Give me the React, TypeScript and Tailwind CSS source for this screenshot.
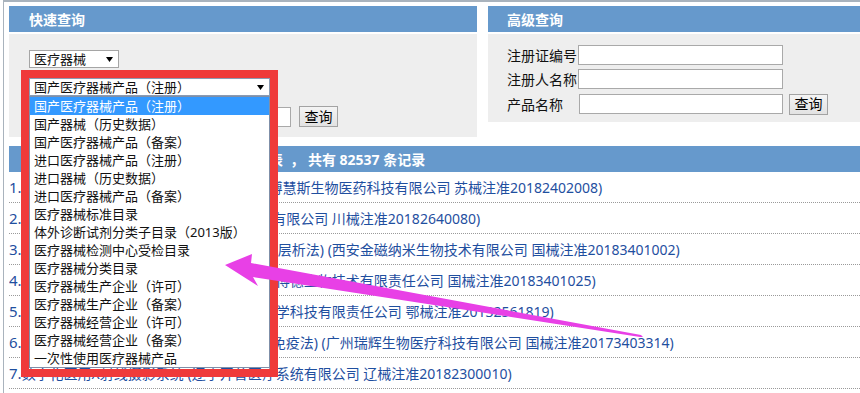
import React from "react";

const items = [
  "国产医疗器械产品（注册）",
  "国产器械（历史数据）",
  "国产医疗器械产品（备案）",
  "进口医疗器械产品（注册）",
  "进口器械（历史数据）",
  "进口医疗器械产品（备案）",
  "医疗器械标准目录",
  "体外诊断试剂分类子目录（2013版）",
  "医疗器械检测中心受检目录",
  "医疗器械分类目录",
  "医疗器械生产企业（许可）",
  "医疗器械生产企业（备案）",
  "医疗器械经营企业（许可）",
  "医疗器械经营企业（备案）",
  "一次性使用医疗器械产品",
];

const rows = [
  "血清淀粉样蛋白A(SAA)测定试剂盒 (苏州博慧斯生物医药科技有限公司 苏械注准20182402008)",
  "肌钙蛋白I测定试剂盒 (成都爱兴生物科技有限公司 川械注准20182640080)",
  "人降钙素原全定量检测试剂盒(胶体金免疫层析法) (西安金磁纳米生物技术有限公司 国械注准20183401002)",
  "幽门螺杆菌抗体检测试剂盒(金标法) (北京博德生物技术有限责任公司 国械注准20183401025)",
  "尿液分析试纸(干化学法) (武汉毓晋生物医学科技有限责任公司 鄂械注准20132561819)",
  "乙型肝炎病毒e抗体定量检测试剂盒(酶联免疫法) (广州瑞辉生物医疗科技有限公司 国械注准20173403314)",
  "数字化医用X射线摄影系统 (辽宁开普医疗系统有限公司 辽械注准20182300010)",
];

function Arrow() {
  return (
    <svg width="7" height="5" viewBox="0 0 7 5" className="block">
      <polygon points="0,0 7,0 3.5,5" fill="#000" />
    </svg>
  );
}

function Btn() {
  return (
    <div className="flex items-center justify-center w-[39px] h-[21px] border border-[#a3a3a3] bg-gradient-to-b from-[#f4f4f4] to-[#e2e2e2] text-[14px] text-black leading-none">
      查询
    </div>
  );
}

export default function App() {
  return (
    <div className="relative w-[860px] h-[393px] overflow-hidden bg-white font-[Noto_Sans,Noto_Sans_CJK_SC,sans-serif]">
      <div className="ml-[3px] h-full border-l border-t-2 border-[#a9b3bd] pl-[5px] pt-[4px]">
        <div className="flex gap-[11px]">
          {/* left panel */}
          <div className="w-[468px] shrink-0">
            <div className="h-[26px] bg-[#6699cc] pl-[20px] flex items-center text-[14px] font-bold text-white">
              快速查询
            </div>
            <div className="mt-[2px] h-[103px] bg-[#eeeeee] pl-[20px] pt-[16px]">
              <div className="flex items-center justify-between w-[90px] h-[18px] border border-[#a5a5a5] bg-white pl-[4px] pr-[5px] text-[13px] text-[#111] leading-none">
                <span>医疗器械</span>
                <Arrow />
              </div>
              <div className="relative mt-[10px] w-[241px] h-[18px]">
                <div className="flex items-center justify-between w-full h-full border border-[#8a9bb3] bg-white pl-[4px] pr-[5px] text-[13px] text-[#111] leading-none">
                  <span>国产医疗器械产品（注册）</span>
                  <Arrow />
                </div>
              </div>
              <div className="mt-[10px] flex items-center h-[21px]">
                <div className="ml-[71px] w-[191px] h-[20px] border border-[#a9a9a9] bg-white" />
                <div className="ml-[8px]">
                  <Btn />
                </div>
              </div>
            </div>
          </div>
          {/* right panel */}
          <div className="w-[372px] shrink-0">
            <div className="h-[26px] bg-[#6699cc] pl-[19px] flex items-center text-[14px] font-bold text-white">
              高级查询
            </div>
            <div className="mt-[2px] h-[88px] bg-[#eeeeee] pl-[19px] pt-[11px] text-[14px] text-[#111]">
              <div className="flex items-center h-[20px]">
                <span className="w-[71px] whitespace-nowrap">注册证编号</span>
                <div className="w-[205px] h-[20px] border border-[#a9a9a9] bg-white" />
              </div>
              <div className="mt-[4px] flex items-center h-[20px]">
                <span className="w-[71px] whitespace-nowrap">注册人名称</span>
                <div className="w-[205px] h-[20px] border border-[#a9a9a9] bg-white" />
              </div>
              <div className="mt-[5px] flex items-center h-[20px]">
                <span className="w-[72px] whitespace-nowrap">产品名称</span>
                <div className="w-[204px] h-[20px] border border-[#a9a9a9] bg-white" />
                <div className="ml-[6px]">
                  <Btn />
                </div>
              </div>
            </div>
          </div>
        </div>

        {/* section header */}
        <div className="mt-[9px] h-[26px] bg-[#6699cc] pl-[22px] flex items-center text-[14px] font-bold text-white whitespace-nowrap">
          国产医疗器械产品（注册）数据信息列表{"\u00a0\u00a0，\u00a0"}共有 82537 条记录
        </div>

        {/* list */}
        <div>
          {rows.map((r, i) => (
            <div
              key={i}
              className="h-[31px] flex items-center border-b border-dotted border-[#9a9a9a] text-[14px] text-[#1f4f9f] whitespace-nowrap overflow-hidden"
            >
              <span className="text-[15px]">{i + 1}.</span>
              <span>{r}</span>
            </div>
          ))}
        </div>
      </div>

      {/* open dropdown list */}
      <div className="absolute left-[29px] top-[96px] w-[241px] h-[272px] border border-[#7f8fa8] bg-white text-[13px] text-[#111]">
        {items.map((it, i) => (
          <div
            key={i}
            className={
              i === 0
                ? "h-[18px] leading-[18px] pl-[4px] bg-[#3399ff] text-white whitespace-nowrap"
                : "h-[18px] leading-[18px] pl-[4px] whitespace-nowrap"
            }
          >
            {it}
          </div>
        ))}
      </div>

      {/* red annotation box */}
      <div className="absolute left-[21px] top-[70px] w-[257px] h-[307px] border-[8px] border-[#ef3a3a]" />

      {/* magenta arrow */}
      <svg
        className="absolute left-0 top-0 pointer-events-none"
        width="860"
        height="393"
        viewBox="0 0 860 393"
      >
        <polygon
          points="225,265 252,254 251,263 641,335 643,337 640,337 253,277 258,286"
          fill="#e840e6"
        />
      </svg>
    </div>
  );
}
